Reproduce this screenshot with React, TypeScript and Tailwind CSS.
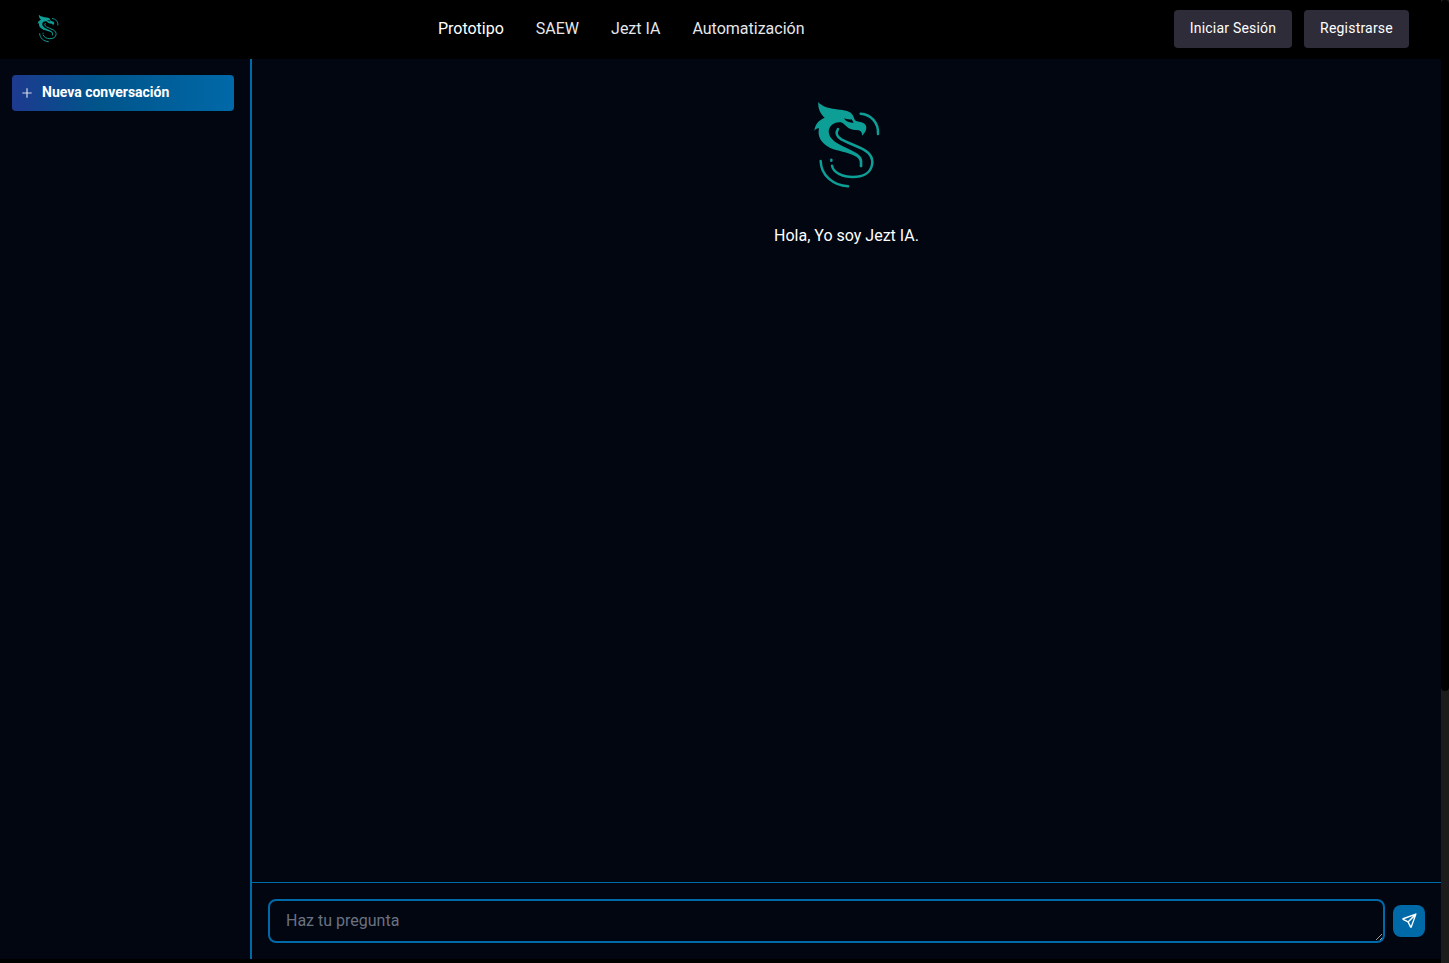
function Logo({ className, arc = 7.5 }: { className: string; arc?: number }) {
  return (
    <svg viewBox="0 0 300 330" className={className} fill="none" stroke="#0d9e96" strokeLinecap="round">
      <path
        fill="#0d9e96"
        stroke="none"
        fillRule="evenodd"
        d="M55 36 C64 48 80 53 98 56 C117 59 140 59 152 68 C159 74 161 80 163 87 C165 93 171 94 180 96 C192 98 199 104 199 113 C199 122 193 130 186 137 C186 128 184 123 176 121 C164 120 154 119 145 114 C136 108 132 100 123 97 C108 94 91 103 87 118 C83 135 95 150 112 160 C127 169 146 177 162 185 C178 193 187 202 187 213 L187 229 C187 233 179 233 179 228 C180 215 179 208 170 201 C153 190 124 185 98 177 C75 167 60 152 57 137 C55 130 56 122 57 115 C51 114 47 117 43 122 C45 103 56 90 74 83 C61 72 53 54 55 36 Z M132 85 C138 95 147 99 161 98 L155 88 C147 90 140 87 132 85 Z"
      />
      <path strokeWidth={arc} d="M114 117 C106 129 110 139 124 148 C145 160 168 166 190 178 C211 190 220 207 216 225 C211 250 187 261 159 261 C127 261 99 247 96 227" />
      <path strokeWidth={arc} d="M182 71 C211 73 236 96 234 132" />
      <path strokeWidth={arc} d="M62 213 C63 256 99 286 144 289" />
      <path strokeWidth={arc} d="M94 209 V212" />
    </svg>
  );
}

const links = ["SAEW", "Jezt IA", "Automatización"];

export default function App() {
  return (
    <div className="flex h-[963px] w-full overflow-hidden bg-black font-[Roboto,sans-serif] text-white">
      <div className="flex min-w-0 flex-1 flex-col">
        <header className="grid h-[59px] shrink-0 grid-cols-[437.9px_1fr_auto] items-center pr-8 pb-[1px]">
          <Logo arc={9} className="mb-[1px] ml-[33px] h-[35px] w-8" />
          <nav className="flex gap-8 text-base text-gray-200">
            <a className="text-white">Prototipo</a>
            {links.map((l) => (
              <a key={l}>{l}</a>
            ))}
          </nav>
          <div className="flex gap-3 text-sm font-normal tracking-[0.2px]">
            <button className="h-[38px] w-[118px] rounded bg-[#2d2c38] pb-0.5">Iniciar Sesión</button>
            <button className="h-[38px] w-[105px] rounded bg-[#2d2c38] pb-0.5">Registrarse</button>
          </div>
        </header>
        <div className="flex h-[900px] bg-[#020610]">
          <aside className="w-[252px] shrink-0 border-r-2 border-[#0069a8] pt-4 pr-4 pl-3">
            <button className="flex h-9 w-full items-center rounded bg-linear-to-r/srgb from-[#1e3a8f] via-[#00548a] via-38% to-[#0069a8] pl-2.5 text-sm font-bold">
              <svg className="mr-2.5 h-2.5 w-2.5" viewBox="0 0 10 10" stroke="#d3daea" strokeWidth="1.2" fill="none">
                <path d="M5 .3v9.4M.3 5h9.4" />
              </svg>
              <span className="pb-0.5">Nueva conversación</span>
            </button>
          </aside>
          <main className="flex min-w-0 flex-1 flex-col">
            <section className="flex flex-1 flex-col items-center pt-[31px]">
              <Logo className="ml-[7px] h-[110px] w-[100px]" />
              <p className="mt-6 text-base">Hola, Yo soy Jezt IA.</p>
            </section>
            <form className="flex h-[77px] items-center gap-2 border-t border-[#0069a8] px-4">
              <textarea
                rows={1}
                placeholder="Haz tu pregunta"
                className="h-11 flex-1 resize rounded-lg border-2 border-[#0069a8] bg-transparent px-4 py-2 text-base placeholder:text-gray-500"
              />
              <button type="button" className="flex h-8 w-8 items-center justify-center rounded-lg bg-[#0069a8] pb-[1px]">
                <svg className="h-[17px] w-[17px]" viewBox="0 0 24 24" fill="none" stroke="white" strokeWidth="2" strokeLinecap="round" strokeLinejoin="round">
                  <path d="M10 14 21 3M21 3l-6.5 18a.55.55 0 0 1-1 0L10 14l-7-3.5a.55.55 0 0 1 0-1L21 3" />
                </svg>
              </button>
            </form>
          </main>
        </div>
      </div>
      <div className="w-2 bg-[#1c1c1c]">
        <div className="h-[691px] rounded bg-black" />
      </div>
    </div>
  );
}
